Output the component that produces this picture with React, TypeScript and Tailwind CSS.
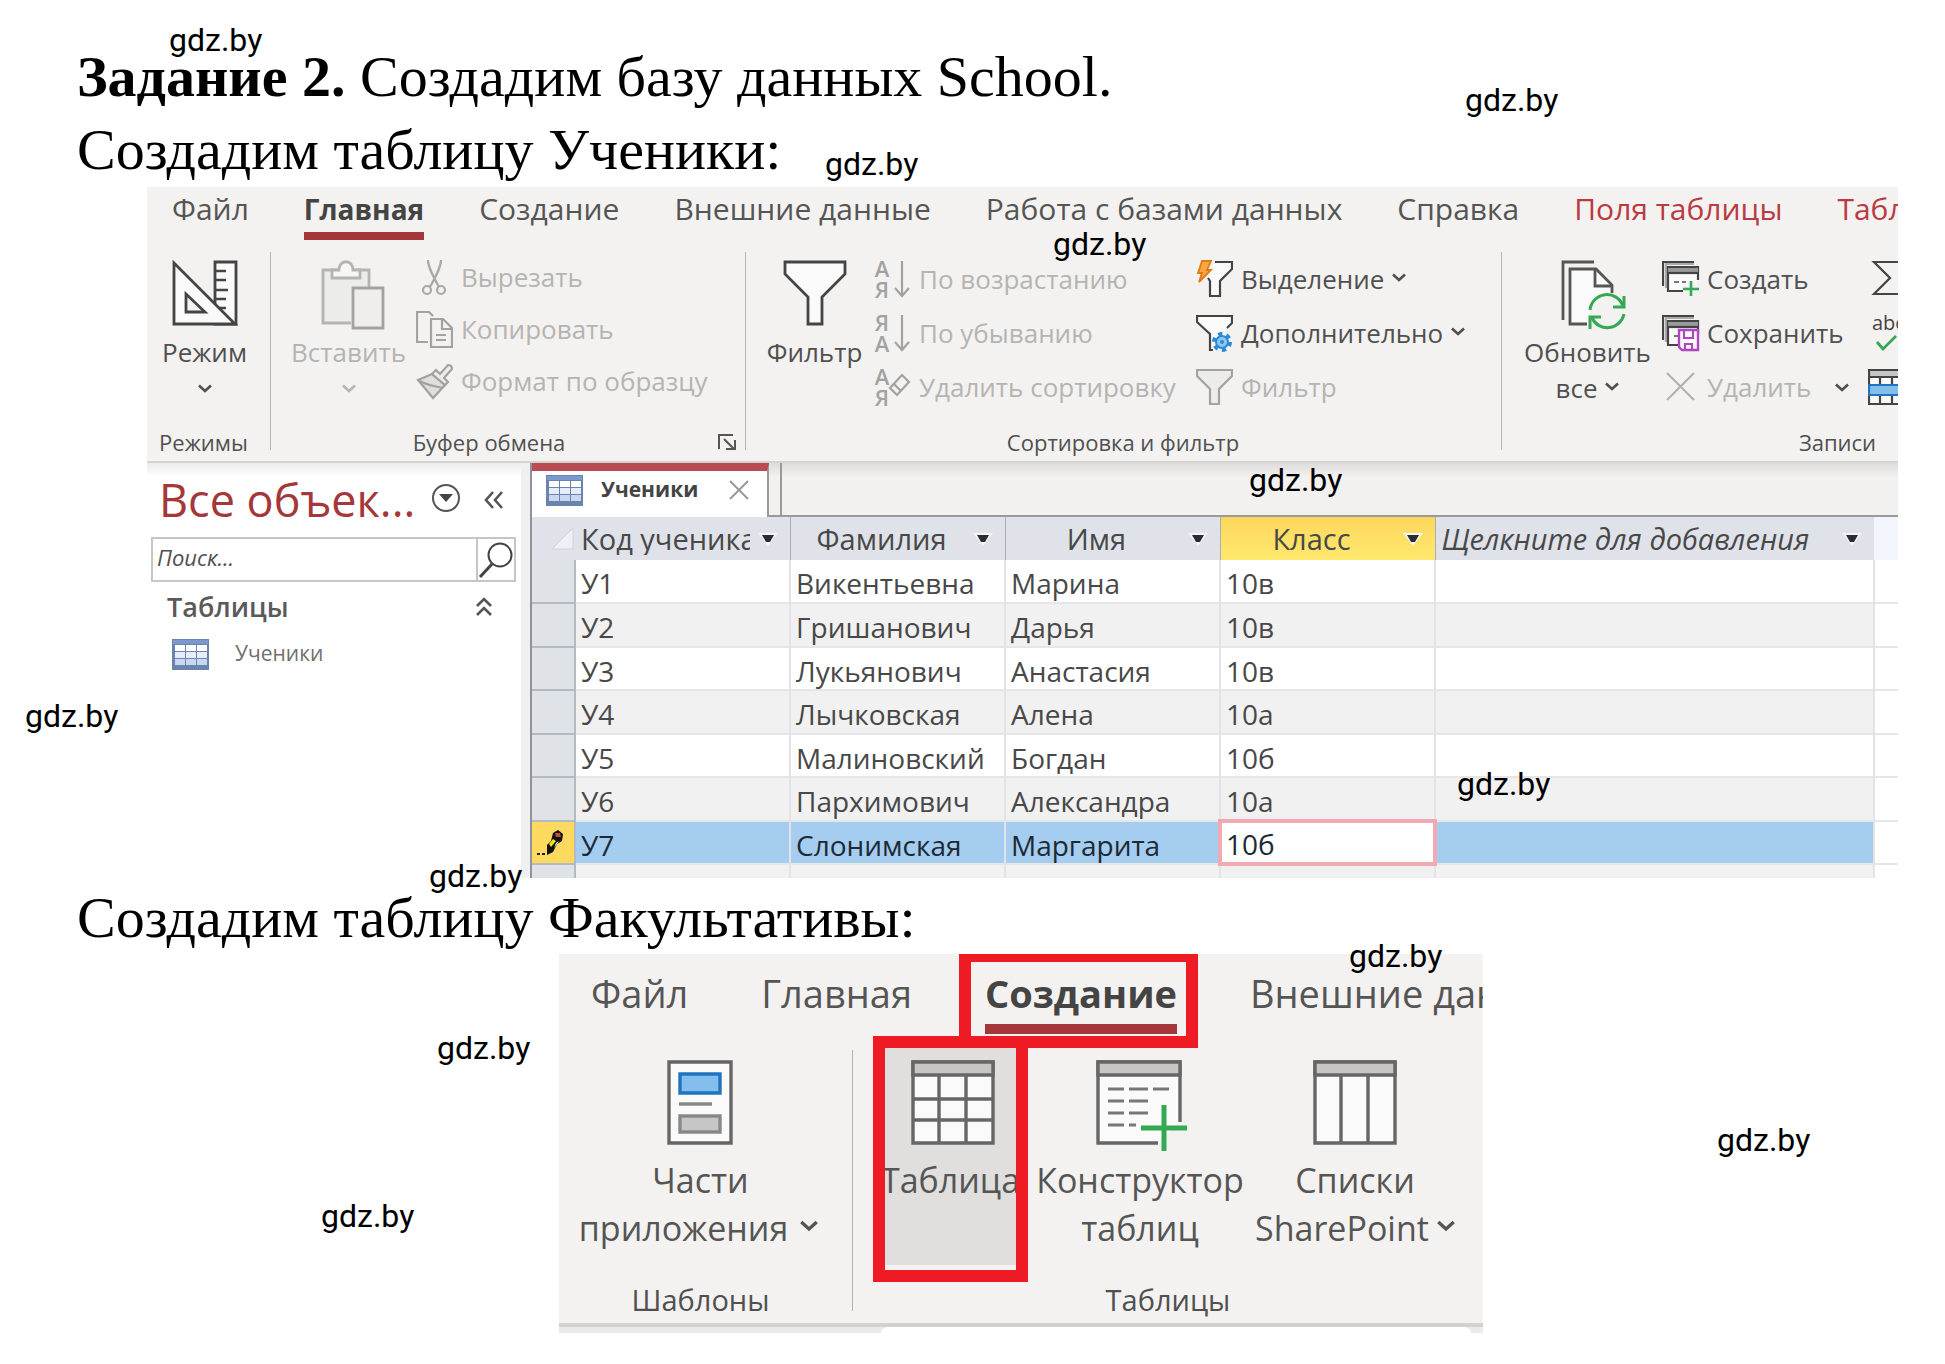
import React from "react";

type IconProps = { className?: string };

const UI_FONT = "font-['Open_Sans','Noto_Sans',sans-serif]";

const watermarks = [
  "left-[169px] top-[24px]",
  "left-[1465px] top-[84px]",
  "left-[825px] top-[148px]",
  "left-[1053px] top-[228px]",
  "left-[1249px] top-[464px]",
  "left-[25px] top-[700px]",
  "left-[1457px] top-[768px]",
  "left-[429px] top-[860px]",
  "left-[1349px] top-[940px]",
  "left-[437px] top-[1032px]",
  "left-[1717px] top-[1124px]",
  "left-[321px] top-[1200px]",
];

const tabs = ["Файл", "Главная", "Создание", "Внешние данные", "Работа с базами данных", "Справка"];
const contextTabs = ["Поля таблицы", "Таблица"];

const students = [
  ["У1", "Викентьевна", "Марина", "10в"],
  ["У2", "Гришанович", "Дарья", "10в"],
  ["У3", "Лукьянович", "Анастасия", "10в"],
  ["У4", "Лычковская", "Алена", "10а"],
  ["У5", "Малиновский", "Богдан", "10б"],
  ["У6", "Пархимович", "Александра", "10а"],
  ["У7", "Слонимская", "Маргарита", "10б"],
];

/* ---------- icons ---------- */

const Chevron = ({ className = "w-[14px]" }: IconProps) => (
  <svg className={`shrink-0 ${className}`} viewBox="0 0 14 9" fill="none" stroke="currentColor" strokeWidth="2.6">
    <path d="M1 1.5 L7 7 L13 1.5" />
  </svg>
);

const RulerIcon = () => (
  <svg width="66" height="66" viewBox="0 0 66 66" stroke="#444" strokeWidth="2.8" fill="#fafafa">
    <path d="M43 2 H64 V64 H43 Z" />
    <path d="M43 11 H54 M43 20 H54 M43 30 H56 M43 39 H54 M43 48 H54" fill="none" strokeWidth="2.4" />
    <path d="M2 3 V64 H63 Z" />
    <path d="M14 34 V52 H33 Z" fill="#f3f2f0" />
  </svg>
);

const PasteIcon = () => (
  <svg className="ml-2" width="64" height="70" viewBox="0 0 64 70" stroke="#b5b4b3" strokeWidth="2.8" fill="#ececeb">
    <path d="M30 63 H2 V10 H48 V28" />
    <path d="M11 10 H18 C18 -1 32 -1 32 10 H39 V18 H11 Z" fill="#f7f7f6" />
    <path d="M32 28 H62 V68 H32 Z" stroke="#a3a2a1" fill="#efeeed" />
  </svg>
);

const FunnelIcon = () => (
  <svg width="64" height="66" viewBox="0 0 64 66" stroke="#444" strokeWidth="2.8" fill="#fafafa">
    <path d="M2 2 H62 V14 L39 37 V64 H25 V37 L2 14 Z" />
  </svg>
);

const RefreshIcon = () => (
  <svg className="ml-3" width="66" height="70" viewBox="0 0 66 70" stroke="#555" strokeWidth="2.8" fill="none">
    <path d="M2 60 V2 H33" />
    <path d="M26 64 H9 V9 H35 L51 25 V33" fill="#fafafa" />
    <path d="M34 9 V26 H51" />
    <circle cx="46" cy="52" r="18" fill="#f3f2f0" stroke="none" />
    <g stroke="#35a853" strokeWidth="3">
      <path d="M29 50 A17 17 0 0 1 62 46" />
      <path d="M63 36 V47 H52" />
      <path d="M63 54 A17 17 0 0 1 31 58" />
      <path d="M29 69 V57 H40" />
    </g>
  </svg>
);

const ScissorsIcon = () => (
  <svg width="37" height="37" viewBox="0 0 37 37" stroke="#a9a8a7" strokeWidth="2.2" fill="none">
    <path d="M12 1 C12 8 17 17 23 28 M25 1 C25 8 20 17 14 28" />
    <circle cx="11" cy="31" r="4" />
    <circle cx="25" cy="31" r="4" />
  </svg>
);

const CopyIcon = () => (
  <svg width="37" height="37" viewBox="0 0 37 37" stroke="#a3a2a1" strokeWidth="2.2" fill="none">
    <path d="M12 31 H1 V1 H13 L17 5" />
    <path d="M15 8 H27 L36 17 V36 H15 Z M26 8 V18 H36 M20 24 H30 M20 29 H30" />
  </svg>
);

const BrushIcon = () => (
  <svg width="37" height="37" viewBox="0 0 37 37" stroke="#a3a2a1" strokeWidth="2.2" fill="#dededd">
    <path d="M2 17 L16 11 L29 22 L17 35 Z" />
    <path d="M2 17 C9 22 19 23 26 25" fill="none" />
    <path d="M16 11 L20 7 L24 11 L32 2 Q36 2 36 6 L28 15 L32 19 L29 22 Z" fill="#ececeb" />
  </svg>
);

type SortProps = { top: string; bottom: string; eraser?: boolean };

const SortIcon = ({ top, bottom, eraser }: SortProps) => (
  <svg width="37" height="39" viewBox="0 0 37 39" stroke="#a3a2a1" strokeWidth="2.2" fill="none">
    <g className="font-['Open_Sans',sans-serif]" fill="#a3a2a1" stroke="none" fontSize="22" fontWeight="600" textAnchor="middle">
      <text x="8" y="17">{top}</text>
      <text x="8" y="38">{bottom}</text>
    </g>
    {eraser ? (
      <path d="M16 20 L28 7 L35 14 L23 27 Z M20 16 L27 23" />
    ) : (
      <path d="M28 1 V36 M21 28 L28 36 L35 28" />
    )}
  </svg>
);

const SelectionIcon = () => (
  <svg width="37" height="38" viewBox="0 0 37 38" stroke="#444" strokeWidth="2.2" fill="none">
    <path d="M19 2 H36 V9 L24 21 V36 H14 V21 L12 18" fill="#fafafa" />
    <path d="M6 1 H15 L11 10 H15 L3 22 L6 13 H2 Z" fill="#f5a742" stroke="#e07a14" strokeWidth="1.8" />
  </svg>
);

const AdvancedIcon = () => (
  <svg width="37" height="38" viewBox="0 0 37 38" stroke="#444" strokeWidth="2.2" fill="none">
    <path d="M17 36 H14 V20 L1 8 V2 H36 V9 L31 14" fill="#fafafa" />
    <circle cx="26" cy="28" r="8" stroke="#2b8ad6" strokeWidth="4" strokeDasharray="4.2 4.2" />
    <circle cx="26" cy="28" r="6" fill="#8cc4f2" stroke="#2b8ad6" strokeWidth="2" />
    <circle cx="26" cy="28" r="2" fill="#2b8ad6" stroke="none" />
  </svg>
);

const SmallFunnelIcon = () => (
  <svg width="37" height="38" viewBox="0 0 37 38" stroke="#a3a2a1" strokeWidth="2.2" fill="#ececeb">
    <path d="M1 2 H36 V8 L23 21 V36 H14 V21 L1 8 Z" />
  </svg>
);

const FormStack = () => (
  <>
    <path d="M1 26 V2 H32" />
    <path d="M4 28 V4 H32" stroke="#aaa" />
    <path d="M29 31 H6 V7 H36 V20" fill="#fafafa" />
    <path d="M6 10 H36" stroke="#999" strokeWidth="4" />
    <path d="M6 13 H36" />
    <path d="M12 22 H17 M20 22 H24" stroke="#777" />
  </>
);

const NewRecordIcon = () => (
  <svg width="38" height="38" viewBox="0 0 38 38" stroke="#444" strokeWidth="2.2" fill="none">
    <FormStack />
    <path d="M29 22 V37 M21 29 H37" stroke="#f3f2f0" strokeWidth="6" />
    <path d="M29 21 V36 M21 29 H37" stroke="#35a853" strokeWidth="2.6" />
  </svg>
);

const SaveRecordIcon = () => (
  <svg width="38" height="38" viewBox="0 0 38 38" stroke="#444" strokeWidth="2.2" fill="none">
    <FormStack />
    <path d="M17 16 H36 V36 H20 L17 33 Z" stroke="#b146c2" strokeWidth="2.4" fill="#fafafa" />
    <path d="M22 16 V24 H31 V16 M23 36 V30 H30 V36" stroke="#b146c2" strokeWidth="2.2" />
  </svg>
);

const DeleteIcon = () => (
  <svg width="38" height="38" viewBox="0 0 38 38" stroke="#b1b0af" strokeWidth="2" fill="none">
    <path d="M5 5 L32 32 M32 5 L5 32" />
  </svg>
);

const SigmaIcon = () => (
  <svg width="40" height="38" viewBox="0 0 40 38" stroke="#444" strokeWidth="2.2" fill="none">
    <path d="M38 8 V2 H6 L22 18 L6 34 H38 V28" />
  </svg>
);

const SpellingIcon = () => (
  <svg width="44" height="40" viewBox="0 0 44 40" fill="none">
    <text className="font-['Open_Sans',sans-serif]" x="4" y="17" fontSize="20" fill="#444">abc</text>
    <path d="M9 29 L15 36 L28 23" stroke="#35a853" strokeWidth="2.8" />
  </svg>
);

const MoreRecordsIcon = () => (
  <svg width="44" height="38" viewBox="0 0 44 38" stroke="#444" strokeWidth="2.2" fill="none">
    <path d="M1 2 H44 V36 H1 Z" fill="#fafafa" />
    <path d="M1 2 H44 V9 H1 Z" fill="#c8c6c4" />
    <path d="M12 9 V36 M24 9 V36 M36 9 V36" />
    <path d="M1 17 H44 V27 H1 Z" fill="#83beec" stroke="#1f74bf" />
  </svg>
);

const LauncherIcon = () => (
  <svg width="20" height="18" viewBox="0 0 20 18" stroke="#555" strokeWidth="2" fill="none">
    <path d="M2 16 V2 H16 M7 6 L17 16 M18 7 V16 H9" />
  </svg>
);

const DatasheetIcon = () => (
  <svg className="shrink-0" width="37" height="31" viewBox="0 0 37 31">
    <path d="M0 0 H37 V31 H0 Z" fill="#6b84ae" />
    <path d="M1 1 H36 V5 H1 Z" fill="#7c99cb" />
    <path d="M3 6 H13 V12 H3 Z M14 6 H24 V12 H14 Z M25 6 H35 V12 H25 Z" fill="#fff" />
    <path d="M3 13 H13 V19 H3 Z M14 13 H24 V19 H14 Z M25 13 H35 V19 H25 Z" fill="#e6edf9" />
    <path d="M3 20 H13 V26 H3 Z M14 20 H24 V26 H14 Z M25 20 H35 V26 H25 Z" fill="#c9d8f2" />
  </svg>
);

const DropArrow = () => (
  <svg className="shrink-0" width="20" height="14" viewBox="0 0 20 14">
    <path d="M0 1 H20 L10 14 Z" fill="#f4f5f8" />
    <path d="M4 3 H16 L12 10 H8 Z" fill="#2c2c33" />
  </svg>
);

const PencilIcon = () => (
  <svg className="ml-1" width="32" height="28" viewBox="0 0 32 28">
    <path d="M1 24 h3 v2 h-3 Z M6 24 h3 v2 h-3 Z" fill="#222" />
    <path d="M11 26 V16 L15 12 L17 4 L22 1 L27 5 L26 12 L21 15 L17 23 Z" fill="#111" />
    <path d="M19 4 L24 4 L25 8 L20 8 Z" fill="#c0503a" />
    <path d="M13 15 L17 10 L20 12 L15 18 Z" fill="#f4e11c" />
    <path d="M20 14 L23 12 L18 19 Z" fill="#fff" />
  </svg>
);

const PartsIcon = () => (
  <svg width="66" height="85" viewBox="0 0 66 85" stroke="#666" strokeWidth="3.4" fill="#fafafa">
    <path d="M2 2 H64 V83 H2 Z" />
    <path d="M13 14 H53 V33 H13 Z" fill="#83beec" stroke="#1f74bf" />
    <path d="M12 44 H45" stroke="#888" />
    <path d="M13 56 H53 V72 H13 Z" fill="#c8c6c4" stroke="#888" />
  </svg>
);

const TableIcon = () => (
  <svg className="ml-1" width="84" height="85" viewBox="0 0 84 85" stroke="#666" strokeWidth="3.4" fill="#fafafa">
    <path d="M2 2 H82 V83 H2 Z" />
    <path d="M2 2 H82 V15 H2 Z" fill="#c8c6c4" />
    <path d="M28 15 V83 M55 15 V83 M2 39 H82 M2 60 H82" />
  </svg>
);

const DesignerIcon = () => (
  <svg className="ml-1" width="92" height="91" viewBox="0 0 92 91" stroke="#666" strokeWidth="3.4" fill="none">
    <path d="M62 83 H2 V2 H84 V62" fill="#fafafa" />
    <path d="M2 2 H84 V15 H2 Z" fill="#c8c6c4" />
    <path d="M12 29 H28 M33 29 H52 M57 29 H73 M12 41 H28 M33 41 H52 M12 53 H28 M33 53 H52 M12 65 H28 M33 65 H40" stroke="#777" strokeWidth="3" />
    <path d="M68 45 V91 M45 68 H91" stroke="#35a853" strokeWidth="5" />
  </svg>
);

const ListsIcon = () => (
  <svg width="84" height="85" viewBox="0 0 84 85" stroke="#666" strokeWidth="3.4" fill="#fafafa">
    <path d="M2 2 H82 V83 H2 Z" />
    <path d="M2 2 H82 V15 H2 Z" fill="#c8c6c4" />
    <path d="M28 15 V83 M55 15 V83" />
  </svg>
);

/* ---------- ribbon parts ---------- */

type ButtonProps = {
  icon: React.ReactNode;
  label: string;
  disabled?: boolean;
  chevron?: boolean;
  className?: string;
};

const SmallButton = ({ icon, label, disabled, chevron, className = "h-[54px]" }: ButtonProps) => (
  <button
    type="button"
    disabled={disabled}
    className={`flex items-center gap-2 whitespace-nowrap text-[26px] ${disabled ? "text-[#b5b4b3]" : "text-[#505050]"} ${className}`}
  >
    <span className="w-[37px] shrink-0">{icon}</span>
    {label}
    {chevron && <Chevron className="mb-1 w-[14px]" />}
  </button>
);

type GroupProps = { title: string; className: string; children: React.ReactNode };

const Group = ({ title, className, children }: GroupProps) => (
  <section className={`flex shrink-0 flex-col justify-between pb-[7px] ${className}`}>
    <div className="flex">{children}</div>
    <div className="pr-[10px] text-center text-[22px] leading-6 text-[#505050]">{title}</div>
  </section>
);

const Separator = ({ className }: IconProps) => <div className={`w-px shrink-0 bg-[#b5b4b3] ${className}`} />;

const bigButton = "flex shrink-0 flex-col items-center pt-2 text-[26px] leading-9";

const HomeRibbon = () => (
  <div className={UI_FONT}>
    <nav className="flex h-[65px] gap-[55px] overflow-hidden bg-[#f3f2f0] pl-[25px] text-[30px] leading-[44px] whitespace-nowrap text-[#555]">
      {tabs.map((tab) => (
        <button key={tab} type="button" className="flex flex-col">
          {tab === "Главная" ? (
            <>
              <b className="text-[28px] text-[#444]">{tab}</b>
              <span className="mt-px h-2 w-full bg-[#a4373a]" />
            </>
          ) : (
            tab
          )}
        </button>
      ))}
      {contextTabs.map((tab) => (
        <button key={tab} type="button" className="flex flex-col text-[#b93a42]">
          {tab}
        </button>
      ))}
    </nav>

    <div className="flex h-[209px] overflow-hidden bg-[#f3f2f0]">
      <Group title="Режимы" className="w-[123px]">
        <button type="button" className={`${bigButton} w-[115px] text-[#505050]`}>
          <span className="h-[74px]"><RulerIcon /></span>
          Режим
          <span className="flex h-9 items-center"><Chevron /></span>
        </button>
      </Group>
      <Separator className="h-[198px]" />

      <section className="flex w-[474px] shrink-0 flex-col justify-between pb-[7px]">
        <div className="flex pl-[10px]">
          <button type="button" disabled className={`${bigButton} w-[135px] text-[#b5b4b3]`}>
            <span className="h-[74px]"><PasteIcon /></span>
            Вставить
            <span className="flex h-9 items-center"><Chevron /></span>
          </button>
          <div className="flex flex-col">
            <SmallButton icon={<ScissorsIcon />} label="Вырезать" disabled className="h-[51px]" />
            <SmallButton icon={<CopyIcon />} label="Копировать" disabled className="h-[52px]" />
            <SmallButton icon={<BrushIcon />} label="Формат по образцу" disabled className="h-[52px]" />
          </div>
        </div>
        <div className="flex items-center pr-2 text-[22px] leading-6 text-[#505050]">
          <span className="flex-1 pr-[10px] text-center">Буфер обмена</span>
          <button type="button" aria-label="Буфер обмена"><LauncherIcon /></button>
        </div>
      </section>
      <Separator className="h-[198px]" />

      <Group title="Сортировка и фильтр" className="w-[755px] pl-[9px]">
        <button type="button" className={`${bigButton} w-[119px] text-[#505050]`}>
          <span className="h-[74px]"><FunnelIcon /></span>
          Фильтр
        </button>
        <div className="flex w-[322px] flex-col">
          <SmallButton icon={<SortIcon top="А" bottom="Я" />} label="По возрастанию" disabled />
          <SmallButton icon={<SortIcon top="Я" bottom="А" />} label="По убыванию" disabled />
          <SmallButton icon={<SortIcon top="А" bottom="Я" eraser />} label="Удалить сортировку" disabled />
        </div>
        <div className="flex flex-col">
          <SmallButton icon={<SelectionIcon />} label="Выделение" chevron />
          <SmallButton icon={<AdvancedIcon />} label="Дополнительно" chevron />
          <SmallButton icon={<SmallFunnelIcon />} label="Фильтр" disabled />
        </div>
      </Group>
      <Separator className="h-[198px]" />

      <Group title="Записи" className="w-[670px] pl-[11px]">
        <button type="button" className={`${bigButton} w-[149px] text-[#505050]`}>
          <span className="h-[74px]"><RefreshIcon /></span>
          Обновить
          <span className="flex items-center gap-2">все <Chevron className="mb-1 w-[14px]" /></span>
        </button>
        <div className="flex w-[206px] flex-col">
          <SmallButton icon={<NewRecordIcon />} label="Создать" />
          <SmallButton icon={<SaveRecordIcon />} label="Сохранить" />
          <div className="flex items-center gap-6 text-[#505050]">
            <SmallButton icon={<DeleteIcon />} label="Удалить" disabled />
            <Chevron />
          </div>
        </div>
        <div className="flex flex-col">
          <SmallButton icon={<SigmaIcon />} label="" />
          <SmallButton icon={<SpellingIcon />} label="" />
          <SmallButton icon={<MoreRecordsIcon />} label="" />
        </div>
      </Group>
    </div>
  </div>
);

/* ---------- navigation pane and datasheet ---------- */

const NavigationPane = () => (
  <aside className={`w-[374px] shrink-0 bg-white bg-linear-to-b from-[#ececeb] to-white to-[14px] pr-[5px] pl-1 ${UI_FONT}`}>
    <div className="flex h-[74px] items-center pl-2">
      <h2 className="w-[272px] text-[45px] leading-[74px] whitespace-nowrap text-[#a4373a]">Все объек...</h2>
      <button type="button" aria-label="Меню" className="mb-1">
        <svg width="30" height="30" viewBox="0 0 30 30">
          <circle cx="15" cy="15" r="13" fill="none" stroke="#555" strokeWidth="2" />
          <path d="M8 11 H22 L15 19 Z" fill="#444" />
        </svg>
      </button>
      <button type="button" aria-label="Свернуть" className="ml-[23px]">
        <svg width="20" height="18" viewBox="0 0 20 18" fill="none" stroke="#555" strokeWidth="2.6">
          <path d="M9 1 L2 9 L9 17 M18 1 L11 9 L18 17" />
        </svg>
      </button>
    </div>
    <div className="flex h-[45px] border-2 border-[#c6c6c6]">
      <input
        type="search"
        aria-label="Поиск"
        placeholder="Поиск..."
        className="min-w-0 flex-1 pb-1 pl-1 text-[22px] italic outline-none placeholder:text-[#505050]"
      />
      <button type="button" aria-label="Найти" className="flex w-[38px] items-center justify-center border-l-2 border-[#c6c6c6]">
        <svg width="36" height="38" viewBox="0 0 36 38" fill="none" stroke="#444">
          <circle cx="22" cy="14" r="11.5" strokeWidth="2" />
          <path d="M14 23 L2 36" strokeWidth="3" />
        </svg>
      </button>
    </div>
    <div className="flex h-[50px] items-center justify-between pr-6 pl-4 text-[27px] font-semibold text-[#5a5a5a]">
      Таблицы
      <svg width="16" height="20" viewBox="0 0 16 20" fill="none" stroke="#555" strokeWidth="2.6">
        <path d="M1 9 L8 2 L15 9 M1 18 L8 11 L15 18" />
      </svg>
    </div>
    <a href="#students" className="flex h-[44px] items-center gap-[26px] pl-[21px] text-[21px] text-[#707070]">
      <DatasheetIcon />
      Ученики
    </a>
  </aside>
);

const columns = ["Код ученика", "Фамилия", "Имя", "Класс"];

const Datasheet = () => (
  <div id="students" className={`min-w-0 flex-1 border-l-2 border-[#8f949c] ${UI_FONT}`}>
    <div className="flex h-[54px] bg-[#f2f1ef] bg-linear-to-b from-[#dedddb] to-[#f2f1ef] to-[14px]">
      <div className="flex w-[237px] shrink-0 items-center border-t-8 border-r-2 border-t-[#b84c52] border-r-[#9a9a9a] bg-white pb-2 pl-[14px]">
        <DatasheetIcon />
        <span className="w-[146px] pl-[18px] text-[21px] font-bold text-[#444]">Ученики</span>
        <button type="button" aria-label="Закрыть">
          <svg width="20" height="20" viewBox="0 0 20 20" stroke="#999" strokeWidth="2">
            <path d="M1 1 L19 19 M19 1 L1 19" />
          </svg>
        </button>
      </div>
      <div className="w-[13px] shrink-0 border-r-2 border-b-2 border-[#9a9a9a]" />
      <div className="flex-1 border-b-2 border-[#9a9a9a]" />
    </div>

    <table className="w-full table-fixed border-collapse text-[28px] leading-8 text-[#484848]">
      <colgroup>
        <col className="w-[43px]" />
        <col className="w-[215px]" />
        <col className="w-[215px]" />
        <col className="w-[215px]" />
        <col className="w-[215px]" />
        <col className="w-[439px]" />
        <col />
      </colgroup>
      <thead>
        <tr className="h-[43px] bg-[#dfe2e8] text-[29px] whitespace-nowrap">
          <th className="p-0">
            <svg className="ml-auto" width="24" height="22" viewBox="0 0 24 22">
              <path d="M22 0 V21 H1 Z" fill="#eef0f5" stroke="#cfd4dd" />
            </svg>
          </th>
          {columns.map((name) => (
            <th
              key={name}
              className={`border-r border-[#a9adb5] p-0 font-normal ${name === "Класс" ? "bg-linear-to-b from-[#fdd65c] to-[#fee96e]" : ""}`}
            >
              <div className="flex items-center pr-3">
                <span className={`min-w-0 flex-1 overflow-hidden ${name === "Код ученика" ? "mr-2 pl-[6px] text-left" : "text-center"}`}>{name}</span>
                <DropArrow />
              </div>
            </th>
          ))}
          <th className="p-0 text-left font-normal italic">
            <div className="flex items-center justify-between pr-3 pl-[6px]">
              Щелкните для добавления
              <DropArrow />
            </div>
          </th>
          <th className="bg-[#f2f5fc] p-0" />
        </tr>
      </thead>
      <tbody>
        {students.map((row) => {
          const active = row[0] === "У7";
          return (
            <tr
              key={row[0]}
              className={`border-b-2 border-[#e6e6e6] odd:h-[43px] even:h-[44px] ${active ? "bg-[#a5cdef] text-[#1c2a36]" : "odd:bg-white even:bg-[#f1f1f1]"}`}
            >
              <td className={`border-r-2 border-b-2 border-[#b4bac4] p-0 ${active ? "bg-[#fdd95f]" : "bg-[#dfe3e8]"}`}>
                {active && <PencilIcon />}
              </td>
              {row.map((value, i) => (
                <td key={i} className="relative border-r-2 border-[#e2e3e6] p-0 pt-1 pl-[5px]">
                  {active && i === 3 ? (
                    <input
                      aria-label="Класс"
                      defaultValue={value}
                      className="absolute -inset-x-[3px] -inset-y-[3px] border-4 border-[#f2a9b1] bg-white pt-[2px] pl-1 outline-none"
                    />
                  ) : (
                    value
                  )}
                </td>
              ))}
              <td className="border-r-2 border-[#e2e3e6] p-0" />
              <td className="border-b border-[#f4f4f4] bg-white p-0" />
            </tr>
          );
        })}
        <tr className="h-[14px] bg-[#f1f1f1]">
          <td className="border-r-2 border-[#b4bac4] bg-[#dfe3e8] p-0" />
          {columns.map((name) => (
            <td key={name} className="border-r-2 border-[#e2e3e6] p-0" />
          ))}
          <td className="border-r-2 border-[#e2e3e6] p-0" />
          <td className="bg-white p-0" />
        </tr>
      </tbody>
    </table>
  </div>
);

/* ---------- "Создание" ribbon ---------- */

const createButton = "flex shrink-0 flex-col items-center pt-3 text-[34px] leading-[48px] whitespace-nowrap text-[#555]";

const CreateRibbon = () => (
  <div className={`relative mx-auto w-[924px] overflow-hidden bg-[#f3f2f0] ${UI_FONT}`}>
    <nav className="flex h-[94px] gap-[73px] pt-2 pl-8 text-[38px] leading-[62px] whitespace-nowrap text-[#555]">
      <button type="button" className="flex flex-col">Файл</button>
      <button type="button" className="flex flex-col">Главная</button>
      <button type="button" className="flex flex-col">
        <b className="text-[#444]">Создание</b>
        <span className="h-[10px] w-full bg-[#a4373a]" />
      </button>
      <button type="button" className="flex flex-col">Внешние данные</button>
    </nav>

    <div className="flex h-[275px]">
      <section className="flex w-[293px] shrink-0 flex-col items-center justify-between pr-[10px] pb-[5px]">
        <button type="button" className={createButton}>
          <span className="h-[96px]"><PartsIcon /></span>
          Части
          <span className="flex items-center gap-3 pr-1">приложения <Chevron className="mb-1 w-[18px]" /></span>
        </button>
        <div className="text-[29px] leading-9 text-[#505050]">Шаблоны</div>
      </section>
      <Separator className="mt-[2px] h-[261px]" />
      <section className="flex flex-1 flex-col justify-between pb-[5px]">
        <div className="flex pl-8">
          <button type="button" className={`${createButton} h-[217px] w-[131px] overflow-hidden bg-[#e0dfdd]`}>
            <span className="h-[96px]"><TableIcon /></span>
            Таблица
          </button>
          <button type="button" className={`${createButton} ml-3 w-[224px]`}>
            <span className="h-[96px]"><DesignerIcon /></span>
            Конструктор
            <span>таблиц</span>
          </button>
          <button type="button" className={`${createButton} w-[206px]`}>
            <span className="h-[96px]"><ListsIcon /></span>
            Списки
            <span className="flex items-center gap-2">SharePoint <Chevron className="mb-1 w-[18px]" /></span>
          </button>
        </div>
        <div className="text-center text-[29px] leading-9 text-[#505050]">Таблицы</div>
      </section>
    </div>
    <div className="h-[10px] border-t-4 border-[#d2d1cf] bg-[#ebeae9] pr-3 pl-[322px]">
      <div className="h-full rounded-t-md bg-white" />
    </div>

    {/* red highlight frames */}
    <div className="absolute top-0 left-[400px] h-[94px] w-[239px] border-[12px] border-t-8 border-[#ee1b24]" />
    <div className="absolute top-[82px] left-[314px] h-[246px] w-[155px] border-[12px] border-[#ee1b24]" />
  </div>
);

export default function App() {
  return (
    <main className="relative min-h-screen overflow-hidden bg-white pt-10 pb-[31px]">
      <div className="pl-[77px] font-['Liberation_Serif',serif] text-[58px] leading-[73px] text-black">
        <h1><b>Задание 2.</b> Создадим базу данных School.</h1>
        <p className="pb-px">Создадим таблицу Ученики:</p>
      </div>

      <div className="mr-[47px] ml-[147px] overflow-hidden">
        <HomeRibbon />
        <div className="flex h-[417px] overflow-hidden border-t-2 border-[#d4d3d1]">
          <NavigationPane />
          <div className="w-[9px] shrink-0 bg-[#f0f0f0]" />
          <Datasheet />
        </div>
      </div>

      <p className="pt-[3px] pl-[77px] font-['Liberation_Serif',serif] text-[58px] leading-[73px] text-black">
        Создадим таблицу Факультативы:
      </p>
      <div className="pr-[50px] pl-[147px]">
        <CreateRibbon />
      </div>

      {watermarks.map((place) => (
        <span key={place} className={`absolute font-[Roboto,sans-serif] text-[32px] leading-8 text-black ${place}`}>
          gdz.by
        </span>
      ))}
    </main>
  );
}
